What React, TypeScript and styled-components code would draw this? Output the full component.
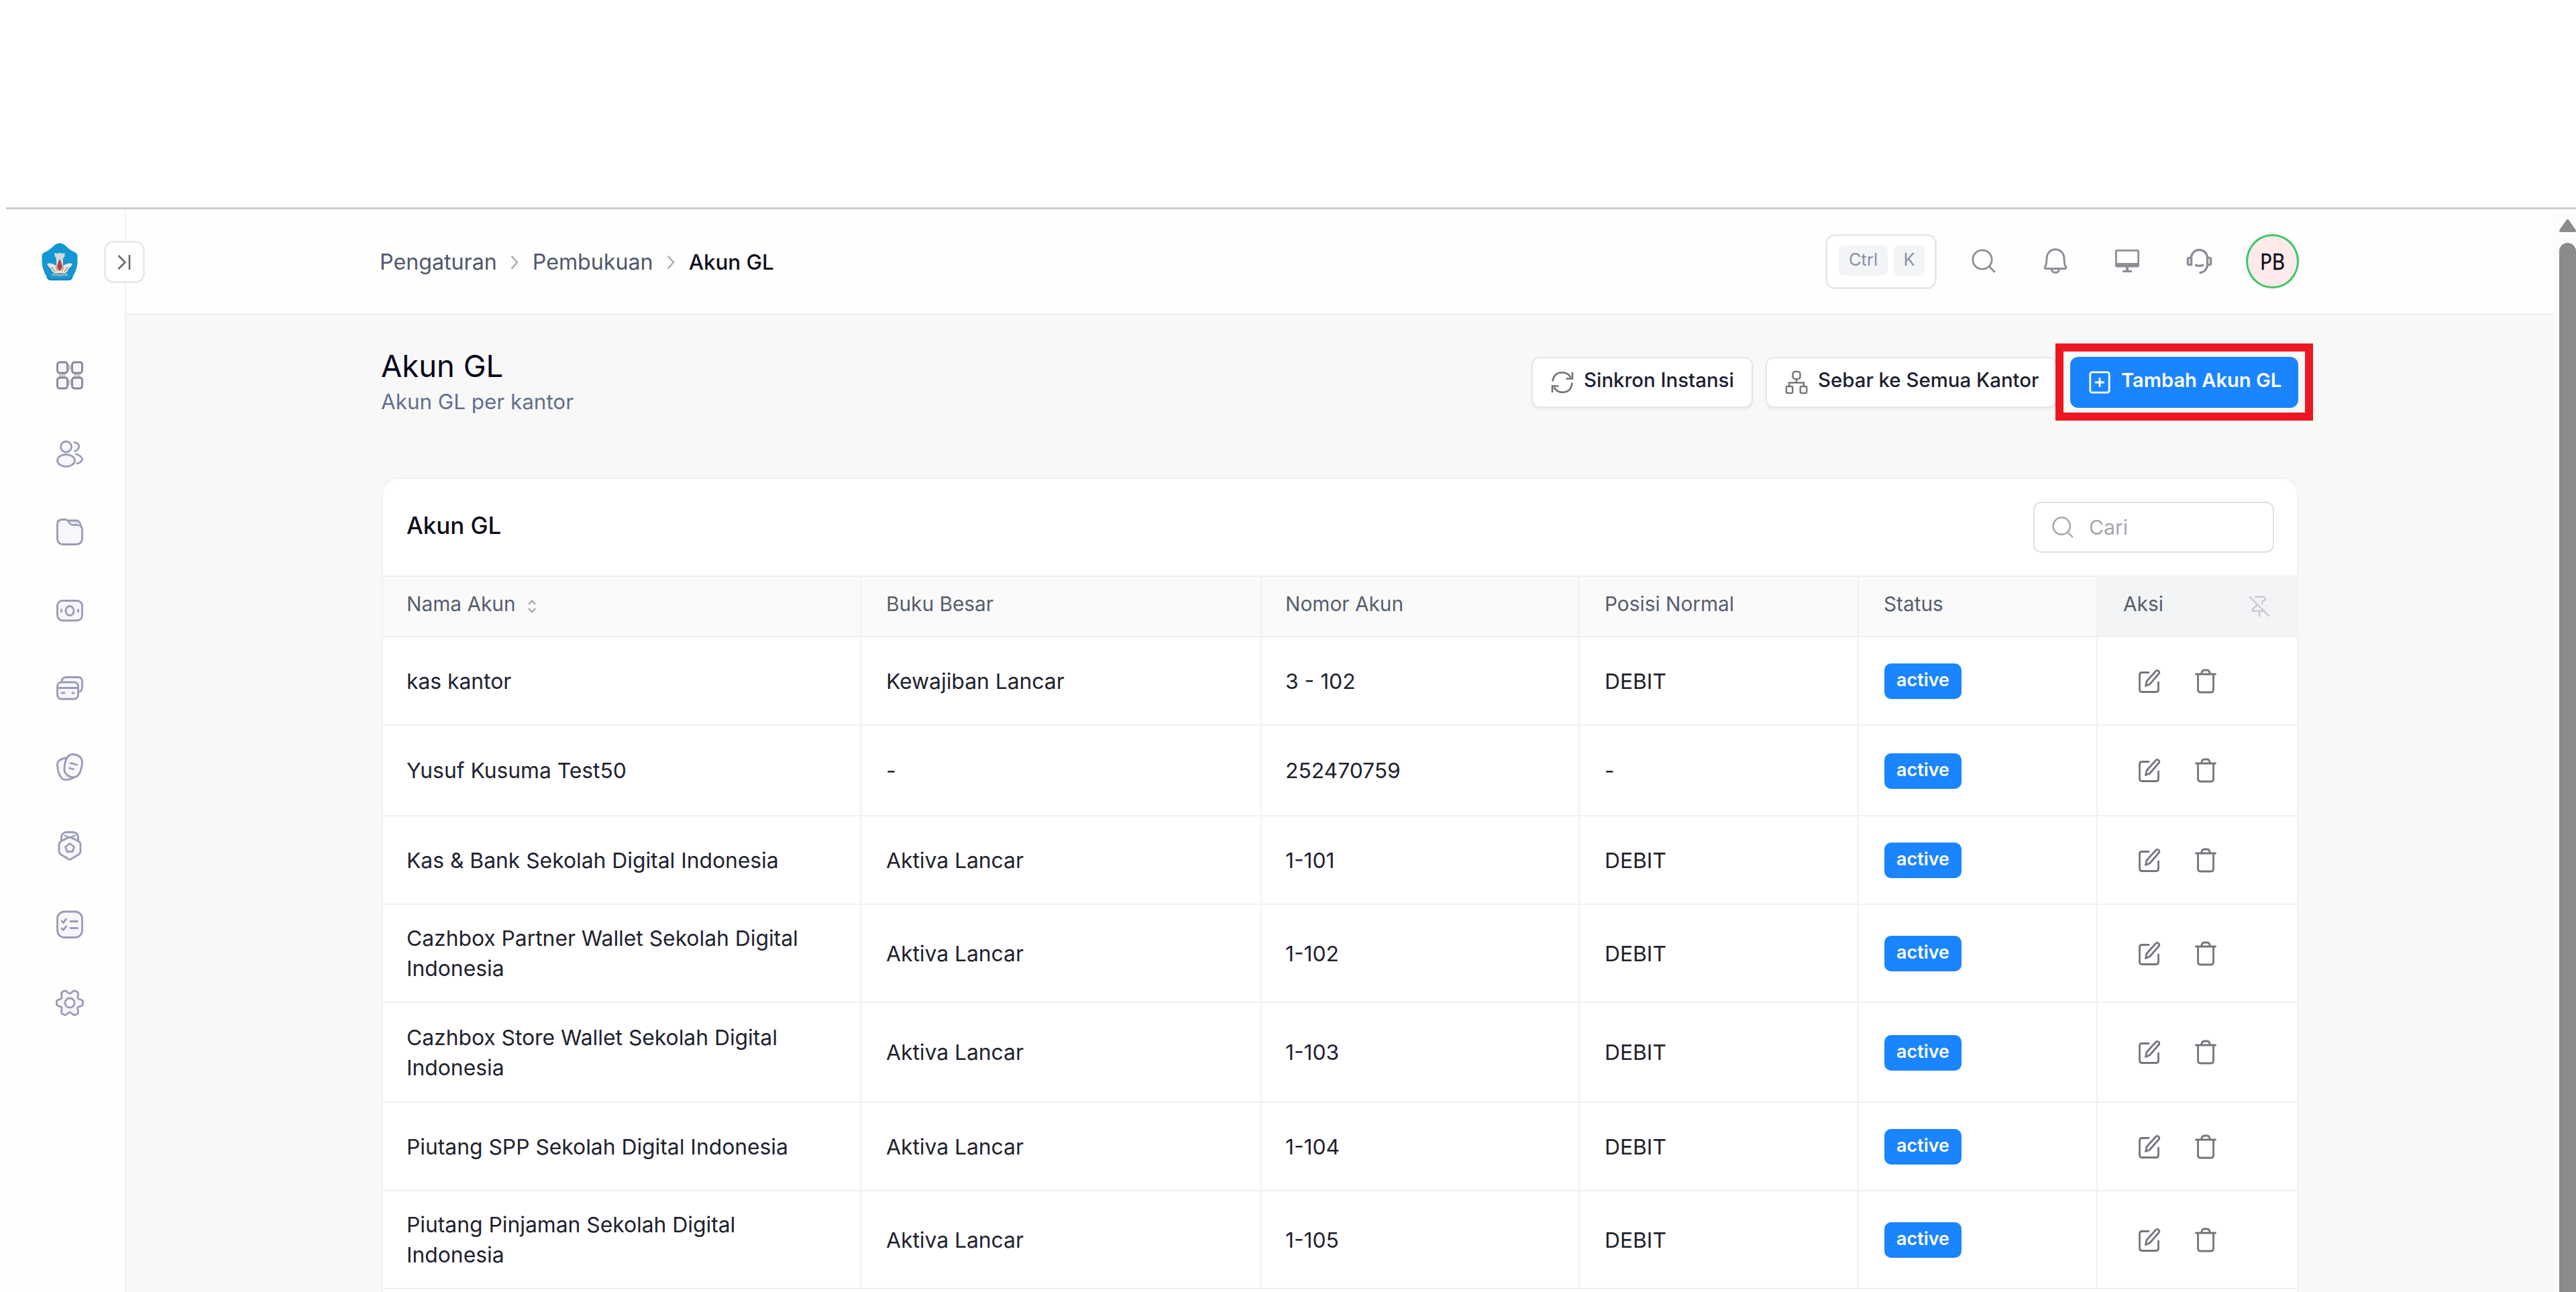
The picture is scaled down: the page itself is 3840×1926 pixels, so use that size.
import React from 'react';
import styled, { createGlobalStyle } from 'styled-components';
import { PinOff } from 'lucide-react';
import { PiBell } from 'react-icons/pi';
import { RiCustomerService2Line } from 'react-icons/ri';

const GlobalStyle = createGlobalStyle`
  *, *::before, *::after { box-sizing: border-box; }
  html, body { margin: 0; padding: 0; background: #fff; }
  body {
    font-family: Inter, "Liberation Sans", sans-serif;
    color: #252f4a;
    overflow: hidden;
  }
  svg { display: block; flex: none; }
`;

const Page = styled.div`
  display: flex;
  flex-direction: column;
  width: 3840px;
  height: 1926px;
  padding-top: 309px;
  overflow: hidden;
  background: #fff;
`;

const Shell = styled.div`
  display: flex;
  flex: 1;
  min-height: 0;
  position: relative;
  &::before {
    content: "";
    position: absolute;
    top: 0;
    left: 9px;
    right: 0;
    height: 3px;
    background: #cbcbcb;
  }
  padding-top: 3px;
`;

const Sidebar = styled.aside`
  position: relative;
  flex: none;
  width: 188px;
  border-right: 2px solid #f1f1f2;
  background: #fefefe;
`;

const Brand = styled.div`
  height: 223px;
  padding: 50px 0 0 62px;
`;

const Nav = styled.nav`
  display: flex;
  flex-direction: column;
  gap: 69px;
  padding-left: 80px;
`;

const NavIcon = styled.svg`
  width: 48px;
  height: 48px;
  fill: #f6f6fb;
  stroke: #9a9bb6;
  stroke-width: 2.8;
  stroke-linecap: round;
  stroke-linejoin: round;
`;

const Toggle = styled.button`
  position: absolute;
  left: 155px;
  top: 47px;
  z-index: 2;
  display: flex;
  align-items: center;
  justify-content: center;
  width: 61px;
  height: 63px;
  padding: 0 2px 0 0;
  border: 3px solid #e9e9ec;
  border-radius: 14px;
  background: #fff;
`;

const Main = styled.main`
  display: flex;
  flex-direction: column;
  flex: 1;
  min-width: 0;
  background: #f8f8f8;
`;

const Header = styled.header`
  display: flex;
  align-items: center;
  flex: none;
  height: 158px;
  padding: 0 379px 0 380px;
  border-bottom: 3px solid #f0f0f1;
  background: #fefefe;
`;

const Crumbs = styled.div`
  display: flex;
  align-items: center;
  height: 46px;
  margin-top: 3px;
  margin-left: -2px;
  line-height: 46px;
`;

const Crumb = styled.span<{ $current?: boolean }>`
  color: ${(p) => (p.$current ? '#0d0e1b' : '#4f586b')};
  font-size: ${(p) => (p.$current ? '31.4px' : '32.2px')};
  font-weight: ${(p) => (p.$current ? 500 : 400)};
`;

const Separator = styled.svg`
  width: 12px;
  height: 22px;
  margin: 0 21px 0 20px;
  fill: none;
  stroke: #a9abb0;
  stroke-width: 2.4;
`;

const HeaderTools = styled.div`
  display: flex;
  align-items: center;
  margin-left: auto;
`;

const Shortcut = styled.div`
  display: flex;
  align-items: flex-start;
  gap: 9px;
  width: 166px;
  height: 82px;
  margin-right: 50px;
  padding: 14px 0 0 17px;
  border: 3px solid #e9e9ec;
  border-radius: 14px;
  background: #fff;
`;

const Key = styled.kbd<{ $width: number }>`
  width: ${(p) => p.$width}px;
  height: 45px;
  border-radius: 8px;
  background: #f3f4f5;
  color: #8a8fa3;
  font: 400 25.5px/42px Inter, sans-serif;
  text-align: center;
`;

const ToolList = styled.div`
  display: flex;
  align-items: center;
  gap: 67px;
  margin: -1px 50px 0 0;
  color: #8d8e95;
`;

const ToolSlot = styled.span`
  display: flex;
  align-items: center;
  justify-content: center;
  width: 40px;
  height: 40px;
`;

const Avatar = styled.div`
  width: 79px;
  height: 81px;
  border: 3px solid #3cc864;
  border-radius: 50%;
  background: #feeaea;
  color: #0b0b14;
  font: 400 33px/76px "Open Sans", "Noto Sans", sans-serif;
  text-align: center;
`;

const Initials = styled.span`
  display: block;
  transform: scaleX(0.9);
  -webkit-text-stroke: 0.5px currentColor;
`;

const Content = styled.div`
  display: flex;
  flex-direction: column;
  flex: 1;
  min-height: 0;
  padding: 45px 380px 0 381px;
`;

const TitleRow = styled.div`
  display: flex;
  align-items: center;
  justify-content: space-between;
  flex: none;
  height: 107px;
`;

const Titles = styled.div`
  padding-top: 2px;
  margin-left: -1px;
`;

const PageTitle = styled.h1`
  margin: 0;
  font-size: 45.4px;
  line-height: 60px;
  font-weight: 400;
  color: #04041a;
`;

const Subtitle = styled.div`
  font-size: 31.4px;
  line-height: 47px;
  color: #62708c;
`;

const Actions = styled.div`
  display: flex;
  padding-top: 2px;
`;

const Button = styled.button<{ $width: number; $gap: number; $primary?: boolean }>`
  position: relative;
  display: flex;
  align-items: center;
  gap: ${(p) => p.$gap}px;
  width: ${(p) => p.$width}px;
  height: 76px;
  margin-left: ${(p) => (p.$primary ? 20 : 19)}px;
  padding: 0 0 0 ${(p) => (p.$primary ? 28 : 27)}px;
  border: ${(p) => (p.$primary ? '0' : '2px solid #e6e6e9')};
  border-radius: 12px;
  background: ${(p) => (p.$primary ? '#1b84ff' : '#fff')};
  box-shadow: ${(p) => (p.$primary ? 'none' : '0 3px 4px rgba(0, 0, 0, 0.05)')};
  color: ${(p) => (p.$primary ? '#fff' : '#1d2030')};
  font-family: inherit;
  font-size: ${(p) => (p.$primary ? 29.1 : 29.4)}px;
  font-weight: ${(p) => (p.$primary ? 600 : 500)};
  line-height: 40px;
  white-space: nowrap;
`;

const ButtonLabel = styled.span`
  padding-bottom: 5px;
`;

const Highlight = styled.span`
  position: absolute;
  inset: -20px -22px -19px;
  border: 12px solid #ee1620;
  z-index: 1;
`;

const Card = styled.section`
  display: flex;
  flex-direction: column;
  flex: none;
  width: 2857px;
  height: 1400px;
  margin-top: 90px;
  border: 2px solid #f1f1f2;
  border-radius: 24px 24px 0 0;
  background: #fff;
  overflow: hidden;
`;

const CardHeader = styled.div`
  display: flex;
  align-items: center;
  justify-content: space-between;
  flex: none;
  height: 146px;
  padding: 0 34px 0 35px;
  border-bottom: 2px solid #f1f1f2;
`;

const CardTitle = styled.h2`
  margin: 0;
  padding-bottom: 7px;
  font-size: 34.9px;
  line-height: 46px;
  font-weight: 500;
  color: #0b0c18;
`;

const SearchBox = styled.div`
  display: flex;
  align-items: center;
  gap: 23px;
  width: 359px;
  height: 76px;
  padding: 0 0 1px 26px;
  border: 2px solid #e2e2e5;
  border-radius: 12px;
  color: #a5a6ad;
  font-size: 30.2px;
  line-height: 40px;
`;

const TableRow = styled.div<{ $height: number }>`
  display: grid;
  grid-template-columns: 713px 597px 474px 416px 356px 297px;
  flex: none;
  height: ${(p) => p.$height}px;
`;

const Cell = styled.div<{ $pad: number }>`
  display: flex;
  align-items: center;
  padding-left: ${(p) => p.$pad}px;
  border-right: 2px solid #f1f1f2;
  border-bottom: 2px solid #f0f0f1;
  font-size: 31.8px;
  line-height: 44.6px;
  color: #20222e;
  &:last-child { border-right: 0; }
`;

const HeadCell = styled(Cell)<{ $shaded?: boolean }>`
  background: ${(p) => (p.$shaded ? '#f3f4f6' : '#fafafa')};
  font-size: 29.8px;
  color: #565d6d;
`;

const HeadLabel = styled.span`
  padding-bottom: 7px;
`;

const SortIcon = styled.svg`
  width: 14px;
  height: 22px;
  margin-left: 17px;
  fill: none;
  stroke: #a4a6ad;
  stroke-width: 2.4;
`;

const PinSlot = styled.span`
  margin-left: 126px;
  color: #c9cbd0;
`;

const CellText = styled.span`
  max-width: 620px;
  padding-top: 2px;
`;

const Badge = styled.span`
  width: 115px;
  height: 53px;
  margin-top: 1px;
  border-radius: 10px;
  background: #1b84ff;
  color: #fff;
  font-size: 26.9px;
  font-weight: 600;
  line-height: 48px;
  text-align: center;
`;

const RowActions = styled.div`
  display: flex;
  align-items: center;
  gap: 48px;
  padding: 0 0 1px 22px;
`;

const ActionIcon = styled.svg`
  width: 36px;
  height: 38px;
  fill: none;
  stroke: #74757b;
  stroke-width: 2.8;
  stroke-linecap: round;
  stroke-linejoin: round;
`;

const Scrollbar = styled.div`
  display: flex;
  flex-direction: column;
  align-items: flex-end;
  flex: none;
  width: 34px;
  padding-top: 15px;
  background: #fcfcfc;
`;

const Thumb = styled.div`
  flex: 1;
  width: 25px;
  margin-top: 16px;
  border-radius: 13px 13px 0 0;
  background: #8b8b8b;
`;

const Logo = () => (
  <svg width="54" height="56" viewBox="0 0 54 56">
    <path d="M27 .5 Q32 .5 36.500 5 Q43 11.500 50.500 14.500 Q53.500 16 53.500 20 V29 Q53 40 46 51 Q43.500 55.500 39 55.500 H15 Q10.500 55.500 8 51 Q1 40 .5 29 V20 Q.5 16 3.500 14.500 Q11 11.500 17.500 5 Q22 .5 27 .5Z" fill="#1396d4" />
    <path d="M8 51 Q10.500 55.500 15 55.500 H39 Q43.500 55.500 46 51" fill="none" stroke="#0b7fb6" strokeWidth="1.600" />
    <path d="M19.500 14.500 Q23 17 27 14.500 Q31 17 34.500 14.500 V20 Q32 22 32 26 V34 H22 V26 Q22 22 19.500 20Z" fill="#cfdcd9" />
    <path d="M8 31 Q14 29.500 20 33 L27 37 L34 33 Q40 29.500 46 31 Q44 36 40.500 38 Q39 43 35 45 H19 Q15 43 13.500 38 Q10 36 8 31Z" fill="#ece6da" />
    <path d="M15 36 L20 43 M39 36 L34 43 M21 35 L24 42 M33 35 L30 42" stroke="#ab9b82" strokeWidth="1.600" />
    <path d="M27 24 Q31.500 33 30.500 37 Q29 41 27 42 Q25 41 23.500 37 Q22.500 33 27 24Z" fill="#b8404d" />
    <path d="M15 46 Q21 43.500 27 46.500 Q33 43.500 39 46 V50 Q33 48.500 27 50.500 Q21 48.500 15 50Z" fill="#7fb0b3" />
  </svg>
);

// Six-lobed outline: the radius swings between the lobe tips and the notches.
const gearPath = Array.from({ length: 120 }, (_, i) => {
  const angle = (i / 120) * Math.PI * 2;
  const radius = Math.min(19.6, 17.6 + 3.6 * Math.cos(6 * angle));
  const x = 24 + radius * Math.cos(angle);
  const y = 24 + radius * Math.sin(angle);
  return `${i === 0 ? 'M' : 'L'}${x.toFixed(2)} ${y.toFixed(2)}`;
}).join(' ') + 'Z';

const navIcons: React.ReactNode[] = [
  <>
    <path d="M18 9 H30 V17 H18Z M18 31 H30 V39 H18Z M8 17 H18 V31 H8Z M30 17 H40 V31 H30Z" fill="#cdced6" stroke="none" />
    <g stroke="#85869b">
      <rect x="5.500" y="5" width="15" height="16" rx="3.500" />
      <rect x="27.500" y="5" width="15" height="16" rx="3.500" />
      <rect x="5.500" y="28" width="15" height="16" rx="3.500" />
      <rect x="27.500" y="28" width="15" height="16" rx="3.500" />
    </g>
  </>,
  <>
    <circle cx="18.500" cy="14" r="8" />
    <ellipse cx="18.500" cy="34.500" rx="13" ry="9" />
    <path fill="none" d="M31 7.500 Q39 9 37.500 15 Q36.500 19 31.500 20.500 M33.500 25 Q43 28.500 42.500 33 Q41.500 37.500 34.500 39" />
  </>,
  <>
    <path d="M5.500 13 Q5.500 5.500 13 5.500 H17 Q20 5.500 22 8 L24 11 Q26 13.500 29 13.500 H36 Q42.500 14 42.500 21 V33 Q42.500 42.500 33 42.500 H15 Q5.500 42.500 5.500 33Z" />
    <path d="M23 7 H35 Q39.500 8 40.500 15" fill="#dcdce6" />
  </>,
  <>
    <rect x="5.500" y="9.500" width="37" height="29.500" rx="7.500" />
    <ellipse cx="24" cy="24.500" rx="6" ry="7" />
    <path d="M11.500 23 V26 M36.500 23 V26" />
  </>,
  <>
    <path d="M12 13 V12 Q13 6.500 19 6.500 H36 Q42.500 6.500 42.500 13 V21 Q42.500 27 38 28.500" />
    <rect x="5.500" y="14" width="31" height="25" rx="6" />
    <path d="M6 22.500 H36.500 M12 30 H16 M28 30 H30" />
  </>,
  <>
    <path d="M18 10 Q4 12 5.500 22 Q7 35 12 40 Q16 45 29 40" />
    <path d="M28 4.500 Q43 5 42.500 18 Q41 32 35 37 Q29 41 21 36 Q14 32 16.500 20 Q19 5 28 4.500Z" />
    <path d="M25 17.500 L34.500 20 M23.500 25 L29.500 26.500" />
  </>,
  <>
    <path d="M11.500 17 V10 Q13 3.500 20 3.500 H28 Q35 3.500 36.500 10 V17" />
    <path d="M21 12 Q24 10.500 27 12 L37 17 Q40 19 40 22 V32 Q40 35 37 37 L26 43.500 Q24 45.500 22 43.500 L11 37 Q8 35 8 32 V22 Q8 19 11 17Z" />
    <path d="M24 20.500 L30.500 25.500 L28 32.500 H20 L17.500 25.500Z" fill="#fff" />
    <path d="M16 8.500 L24 11.500 L32 8.500" fill="none" strokeWidth="2" />
  </>,
  <>
    <rect x="5.500" y="5" width="37" height="38.500" rx="10.500" />
    <path fill="none" d="M12 19 L14.500 21.500 L18.500 16 M12 30 L14.500 32.500 L18.500 27 M25 19.500 H35.500 M25 29.500 H35.500" />
  </>,
  <>
    <path d={gearPath} />
    <circle cx="24" cy="24" r="7" fill="#fff" />
  </>,
];

const SearchGlyph = ({ width }: { width: number }) => (
  <svg width={width} height={width} viewBox="0 0 36 36" fill="none" stroke="currentColor" strokeWidth="2.800" strokeLinecap="round">
    <circle cx="16" cy="16" r="14.200" />
    <path d="M26.500 26.500 L34 34" />
  </svg>
);

const MonitorGlyph = () => (
  <svg width="38" height="36" viewBox="0 0 38 36" fill="none" stroke="currentColor" strokeWidth="2.800">
    <rect x="2.400" y="2.400" width="33.200" height="23.600" rx="1.500" />
    <path d="M2.400 23.500 H35.600" strokeWidth="5" />
    <path d="M19 26 V33" strokeWidth="4" />
    <path d="M12 33.500 H26" strokeWidth="3" />
  </svg>
);

const SyncGlyph = () => (
  <svg width="34" height="34" viewBox="0 0 34 34" fill="none" stroke="#6f7075" strokeWidth="2.600">
    <path d="M2.500 15.500 Q4 2.500 17 2.200 Q25 2.200 29.500 9.500" />
    <path d="M31.500 17.500 Q30.500 31.500 17 31.800 Q9 31.800 4.500 24.500" />
    <path d="M32 2 V11.500 H22.500" />
    <path d="M2 32 V22.500 H11.500" />
  </svg>
);

const SpreadGlyph = () => (
  <svg width="34" height="36" viewBox="0 0 34 36" fill="none" stroke="#77787d" strokeWidth="2.500">
    <rect x="11.500" y="2" width="11" height="11" rx="3.500" />
    <rect x="1.800" y="24" width="9.500" height="10" rx="2" />
    <rect x="22.700" y="24" width="9.500" height="10" rx="2" />
    <path d="M17 13 V18.500 M6 24 V18.500 H28 V24" />
  </svg>
);

const AddGlyph = () => (
  <svg width="32" height="34" viewBox="0 0 32 34" fill="none" stroke="#fff" strokeWidth="2.800">
    <rect x="1.800" y="1.800" width="28.400" height="30.400" rx="3" />
    <path d="M16 10 V24 M9 17 H23" />
  </svg>
);

const EditGlyph = () => (
  <ActionIcon viewBox="0 0 36 38">
    <path d="M17 6.500 H7 Q3.500 6.500 3.500 10 V32 Q3.500 35.500 7 35.500 H28 Q31.500 35.500 31.500 32 V21" />
    <path d="M28 4 Q30 2.500 32 4.500 Q33.500 6.500 32 8.500 L18.500 24 L12.500 26.500 L14 19.500Z" />
  </ActionIcon>
);

const TrashGlyph = () => (
  <ActionIcon viewBox="0 0 36 38">
    <path d="M3.500 9 H32.500" />
    <path d="M12 8.500 V6.500 Q13 3 16 3 H20 Q23 3 24 6.500 V8.500" />
    <path d="M6.500 9.500 V32 Q6.500 36 10 36 H26 Q29.500 36 29.500 32 V9.500" />
  </ActionIcon>
);

interface Account {
  name: string;
  ledger: string;
  number: string;
  position: string;
  height: number;
}

const accounts: Account[] = [
  { name: 'kas kantor', ledger: 'Kewajiban Lancar', number: '3 - 102', position: 'DEBIT', height: 132 },
  { name: 'Yusuf Kusuma Test50', ledger: '-', number: '252470759', position: '-', height: 135 },
  { name: 'Kas & Bank Sekolah Digital Indonesia', ledger: 'Aktiva Lancar', number: '1-101', position: 'DEBIT', height: 132 },
  { name: 'Cazhbox Partner Wallet Sekolah Digital Indonesia', ledger: 'Aktiva Lancar', number: '1-102', position: 'DEBIT', height: 146 },
  { name: 'Cazhbox Store Wallet Sekolah Digital Indonesia', ledger: 'Aktiva Lancar', number: '1-103', position: 'DEBIT', height: 149 },
  { name: 'Piutang SPP Sekolah Digital Indonesia', ledger: 'Aktiva Lancar', number: '1-104', position: 'DEBIT', height: 132 },
  { name: 'Piutang Pinjaman Sekolah Digital Indonesia', ledger: 'Aktiva Lancar', number: '1-105', position: 'DEBIT', height: 146 },
];

const Chevron = () => (
  <Separator viewBox="0 0 12 22">
    <path d="M1.500 1.500 L10 11 L1.500 20.500" />
  </Separator>
);

export default function App() {
  return (
    <>
      <GlobalStyle />
      <Page>
        <Shell>
          <Sidebar>
            <Brand><Logo /></Brand>
            <Nav>
              {navIcons.map((icon, i) => (
                <NavIcon key={i} viewBox="0 0 48 48">{icon}</NavIcon>
              ))}
            </Nav>
            <Toggle aria-label="Sidebar">
              <svg width="20" height="24" viewBox="0 0 20 24" fill="none" stroke="#66676c" strokeWidth="2.600">
                <path d="M1.500 2 L11.500 12 L1.500 22 M18 1 V23" />
              </svg>
            </Toggle>
          </Sidebar>
          <Main>
            <Header>
              <Crumbs>
                <Crumb>Pengaturan</Crumb>
                <Chevron />
                <Crumb>Pembukuan</Crumb>
                <Chevron />
                <Crumb $current>Akun GL</Crumb>
              </Crumbs>
              <HeaderTools>
                <Shortcut>
                  <Key $width={73}>Ctrl</Key>
                  <Key $width={46}>K</Key>
                </Shortcut>
                <ToolList>
                  <ToolSlot><SearchGlyph width={36} /></ToolSlot>
                  <ToolSlot><PiBell size={46} /></ToolSlot>
                  <ToolSlot><MonitorGlyph /></ToolSlot>
                  <ToolSlot><RiCustomerService2Line size={41} /></ToolSlot>
                </ToolList>
                <Avatar><Initials>PB</Initials></Avatar>
              </HeaderTools>
            </Header>
            <Content>
              <TitleRow>
                <Titles>
                  <PageTitle>Akun GL</PageTitle>
                  <Subtitle>Akun GL per kantor</Subtitle>
                </Titles>
                <Actions>
                  <Button $width={330} $gap={15}>
                    <SyncGlyph />
                    <ButtonLabel>Sinkron Instansi</ButtonLabel>
                  </Button>
                  <Button $width={434} $gap={15}>
                    <SpreadGlyph />
                    <ButtonLabel>Sebar ke Semua Kantor</ButtonLabel>
                  </Button>
                  <Button $width={340} $gap={16} $primary>
                    <AddGlyph />
                    <ButtonLabel>Tambah Akun GL</ButtonLabel>
                    <Highlight />
                  </Button>
                </Actions>
              </TitleRow>
              <Card>
                <CardHeader>
                  <CardTitle>Akun GL</CardTitle>
                  <SearchBox>
                    <SearchGlyph width={32} />
                    Cari
                  </SearchBox>
                </CardHeader>
                <TableRow $height={90}>
                  <HeadCell $pad={35}>
                    <HeadLabel>Nama Akun</HeadLabel>
                    <SortIcon viewBox="0 0 14 22">
                      <path d="M2 8 L7 2.500 L12 8 M2 14 L7 19.500 L12 14" />
                    </SortIcon>
                  </HeadCell>
                  <HeadCell $pad={37}><HeadLabel>Buku Besar</HeadLabel></HeadCell>
                  <HeadCell $pad={35}><HeadLabel>Nomor Akun</HeadLabel></HeadCell>
                  <HeadCell $pad={37}><HeadLabel>Posisi Normal</HeadLabel></HeadCell>
                  <HeadCell $pad={37}><HeadLabel>Status</HeadLabel></HeadCell>
                  <HeadCell $pad={38} $shaded>
                    <HeadLabel>Aksi</HeadLabel>
                    <PinSlot><PinOff size={34} strokeWidth={1.8} /></PinSlot>
                  </HeadCell>
                </TableRow>
                {accounts.map((account) => (
                  <TableRow key={account.name} $height={account.height}>
                    <Cell $pad={35}><CellText>{account.name}</CellText></Cell>
                    <Cell $pad={37}><CellText>{account.ledger}</CellText></Cell>
                    <Cell $pad={35}><CellText>{account.number}</CellText></Cell>
                    <Cell $pad={37}><CellText>{account.position}</CellText></Cell>
                    <Cell $pad={38}><Badge>active</Badge></Cell>
                    <Cell $pad={37}>
                      <RowActions>
                        <EditGlyph />
                        <TrashGlyph />
                      </RowActions>
                    </Cell>
                  </TableRow>
                ))}
              </Card>
            </Content>
          </Main>
          <Scrollbar>
            <svg width="25" height="19" viewBox="0 0 25 19">
              <path d="M12.500 2 L23 17 H2Z" fill="#8b8b8b" stroke="#8b8b8b" strokeWidth="4" strokeLinejoin="round" />
            </svg>
            <Thumb />
          </Scrollbar>
        </Shell>
      </Page>
    </>
  );
}
